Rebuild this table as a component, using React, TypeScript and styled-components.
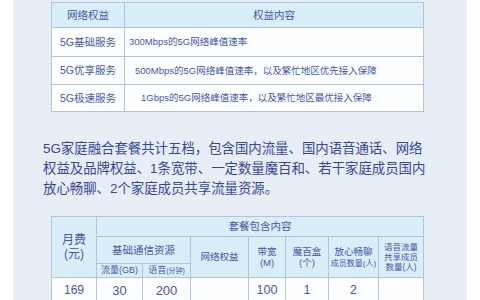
import React from "react";
import styled, { createGlobalStyle } from "styled-components";

const GlobalStyle = createGlobalStyle`
  html, body {
    margin: 0;
    padding: 0;
    background: #ffffff;
  }
  body {
    font-family: "Liberation Sans", "Noto Sans CJK SC", sans-serif;
  }
`;

const Page = styled.div`
  width: 480px;
  height: 300px;
  overflow: hidden;
  background: #ffffff;
  padding: 0 13px;
  box-sizing: border-box;
`;

const Panel = styled.div`
  background: #e8eef6;
  height: 100%;
  padding: 2px 0 0 38px;
  box-sizing: border-box;
`;

const Table = styled.table`
  width: 372px;
  border-collapse: collapse;
  table-layout: fixed;
  color: #4557ab;
  background: #fdfeff;
`;

const Row = styled.tr<{ $h: number }>`
  height: ${(p) => p.$h}px;
`;

const Cell = styled.td<{ $head?: boolean; $size?: number; $align?: string; $indent?: number }>`
  border: 1px solid #b3c3db;
  padding: 0 0 0 ${(p) => p.$indent ?? 0}px;
  background: ${(p) => (p.$head ? "#d8eff9" : "#fdfeff")};
  font-size: ${(p) => p.$size ?? 10.5}px;
  line-height: 1.2;
  text-align: ${(p) => p.$align ?? "center"};
  vertical-align: middle;
  white-space: nowrap;
  overflow: hidden;
`;

const Small = styled.span<{ $size: number }>`
  font-size: ${(p) => p.$size}px;
`;

const Para = styled.p`
  margin: 27px 0 17px -8px;
  width: 390px;
  font-size: 13.4px;
  line-height: 20px;
  color: #34479c;
  white-space: nowrap;
`;

const Line = styled.span`
  display: block;
`;

const benefits = [
  { name: "5G基础服务", text: "300Mbps的5G网络峰值速率", indent: 4, h: 29 },
  { name: "5G优享服务", text: "500Mbps的5G网络峰值速率，以及繁忙地区优先接入保障", indent: 10, h: 28 },
  { name: "5G极速服务", text: "1Gbps的5G网络峰值速率，以及繁忙地区最优接入保障", indent: 16, h: 27 },
];

const planCols = [45, 46, 48, 58, 37, 43, 50, 45];

export default function App() {
  return (
    <Page>
      <GlobalStyle />
      <Panel>
        <Table>
          <colgroup>
            <col style={{ width: 73 }} />
            <col style={{ width: 299 }} />
          </colgroup>
          <tbody>
            <Row $h={25}>
              <Cell $head>网络权益</Cell>
              <Cell $head>权益内容</Cell>
            </Row>
            {benefits.map((b) => (
              <Row $h={b.h} key={b.name}>
                <Cell $size={10.5}>{b.name}</Cell>
                <Cell $size={9.5} $align="left" $indent={b.indent}>
                  {b.text}
                </Cell>
              </Row>
            ))}
          </tbody>
        </Table>

        <Para>
          <Line>5G家庭融合套餐共计五档，包含国内流量、国内语音通话、网络</Line>
          <Line>权益及品牌权益、1条宽带、一定数量魔百和、若干家庭成员国内</Line>
          <Line>放心畅聊、2个家庭成员共享流量资源。</Line>
        </Para>

        <Table>
          <colgroup>
            {planCols.map((w, i) => (
              <col key={i} style={{ width: w }} />
            ))}
          </colgroup>
          <tbody>
            <Row $h={20}>
              <Cell $head rowSpan={3} $size={12}>
                月费
                <br />
                (元)
              </Cell>
              <Cell $head colSpan={7} $size={10.5}>
                套餐包含内容
              </Cell>
            </Row>
            <Row $h={27}>
              <Cell $head colSpan={2} $size={10.5}>
                基础通信资源
              </Cell>
              <Cell $head rowSpan={2} $size={9.5}>
                网络权益
              </Cell>
              <Cell $head rowSpan={2} $size={9.5}>
                带宽
                <br />
                (M)
              </Cell>
              <Cell $head rowSpan={2} $size={9.5}>
                魔百盒
                <br />
                (个)
              </Cell>
              <Cell $head rowSpan={2} $size={9.5}>
                放心畅聊
                <br />
                <Small $size={8}>成员数量(人)</Small>
              </Cell>
              <Cell $head rowSpan={2} $size={8.5}>
                语音流量
                <br />
                共享成员
                <br />
                数量(人)
              </Cell>
            </Row>
            <Row $h={14}>
              <Cell $head $size={9}>
                流量(GB)
              </Cell>
              <Cell $head $size={9}>
                语音<Small $size={7}>(分钟)</Small>
              </Cell>
            </Row>
            <Row $h={26}>
              <Cell $size={12}>169</Cell>
              <Cell $size={13}>30</Cell>
              <Cell $size={13}>200</Cell>
              <Cell />
              <Cell $size={12.5}>100</Cell>
              <Cell $size={12.5}>1</Cell>
              <Cell $size={12.5}>2</Cell>
              <Cell />
            </Row>
          </tbody>
        </Table>
      </Panel>
    </Page>
  );
}
